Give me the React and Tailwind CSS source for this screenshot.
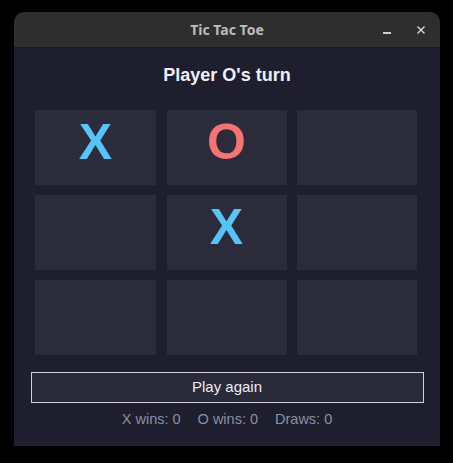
import React from "react";

const board = ["X", "O", "", "", "X", "", "", "", ""];

export default function App() {
  return (
    <div className="w-[453px] h-[463px] bg-black pt-[12px] pl-[14px]">
      <div className="w-[426px] h-[434px] flex flex-col rounded-t-[10px] overflow-hidden">
        <div className="h-[36px] bg-[#2e2e2e] border-b border-[#1a1a1a] flex items-center justify-center relative shrink-0">
          <span className="text-[14px] font-bold text-[#bdbdbd] font-['Noto_Sans',sans-serif] leading-none">Tic Tac Toe</span>
          <div className="absolute left-[369px] top-[20px] w-[8px] h-[1.5px] bg-[#d0d0d0]" />
          <svg className="absolute left-[403px] top-[14px]" width="8" height="8" viewBox="0 0 8 8">
            <path d="M0.5 0.5 L7.5 7.5 M7.5 0.5 L0.5 7.5" stroke="#d8d8d8" strokeWidth="1.4" />
          </svg>
        </div>
        <div className="flex-1 bg-[#1e1e2e] flex flex-col items-center font-['Liberation_Sans',Arial,sans-serif]">
          <div className="mt-[15px] h-[24px] leading-[24px] text-[18px] font-bold text-[#f0f0f5]">Player O's turn</div>
          <div className="mt-[23px] -ml-[2px] grid grid-cols-[121px_120px_120px] grid-rows-[75px_75px_75px] gap-x-[10.5px] gap-y-[10px]">
            {board.map((v, i) => (
              <div key={i} className="bg-[#2b2b3c] flex items-center justify-center pb-[12px]">
                <span className={`text-[50px] font-bold leading-none ${v === "X" ? "text-[#56c4f7]" : "text-[#f47373]"}`}>{v}</span>
              </div>
            ))}
          </div>
          <button className="mt-[17px] w-[393px] h-[31px] border border-[#d0d0dc] bg-[#2a2a3b] text-[#ececf2] text-[15px] flex items-center justify-center">Play again</button>
          <div className="mt-[8px] h-[17px] leading-[17px] text-[14.5px] text-[#8c8fa6] flex gap-[17px]">
            <span>X wins: 0</span>
            <span>O wins: 0</span>
            <span>Draws: 0</span>
          </div>
        </div>
      </div>
    </div>
  );
}
